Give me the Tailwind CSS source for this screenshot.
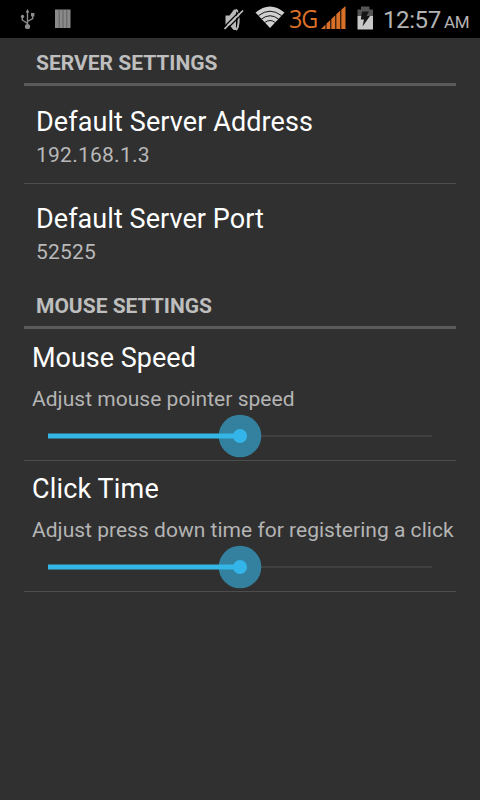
<!DOCTYPE html>
<html lang="en">
<head>
<meta charset="utf-8">
<title>Settings</title>
<script src="https://cdn.jsdelivr.net/npm/@tailwindcss/browser@4"></script>
</head>
<body class="h-[800px] w-[480px] overflow-hidden bg-[#303030] font-['Roboto',sans-serif] text-white">
<header class="flex h-[38px] items-start bg-black">
  <svg class="ml-[20px] mt-[8px] shrink-0" width="16" height="22" viewBox="0 0 16 22" fill="none" stroke="#8c8c8c" stroke-width="1.4">
    <path d="M7.500 18V3M7.500 15.500L2.300 12V9M7.500 13.500L12.700 10.500V7"/>
    <path d="M5.500 4.500L7.500 1L9.500 4.500Z" fill="#8c8c8c" stroke="none"/>
    <circle cx="7.500" cy="18.500" r="2.600" fill="#8c8c8c" stroke="none"/>
    <circle cx="2.500" cy="8.500" r="1.700" fill="#8c8c8c" stroke="none"/>
    <path d="M11 5h3.400v3.400H11z" fill="#8c8c8c" stroke="none"/>
  </svg>
  <svg class="ml-[19px] mt-[9px] shrink-0" width="16" height="20" viewBox="0 0 16 20">
    <path d="M0 .5h15.500v18.500H0z" fill="#8a8a8a"/>
    <path d="M4.200 .5v18.500M8 .5v18.500M11.800 .5v18.500" stroke="#555" stroke-width=".8"/>
  </svg>
  <svg class="ml-[152px] mt-[8px] shrink-0" width="22" height="24" viewBox="0 0 22 24">
    <path d="M2.500 7.500H6.500L11 1.500H13V22L10.500 22L6.500 17H2.500Z" fill="#b8b8b8"/>
    <path d="M13 1.500C16.500 4 16.500 19 13 22" stroke="#b8b8b8" stroke-width="2" fill="none"/>
    <path d="M.5 19.500L19 1" stroke="#000" stroke-width="1.300"/>
    <path d="M2.500 22.500L21 4" stroke="#000" stroke-width="1.300"/>
    <path d="M1.500 21L20 2.500" stroke="#c4c4c4" stroke-width="1.700"/>
  </svg>
  <svg class="ml-[10px] mt-[6px] shrink-0" width="30" height="23" viewBox="0 0 30 23">
    <path d="M15 22L.5 6.500Q15-5.500 29.500 6.500Z" fill="#d0d0d0"/>
    <path d="M3.500 9.600Q15 .8 26.500 9.600M6.500 13Q15 6.500 23.500 13M9.700 16.500Q15 12.500 20.300 16.500" fill="none" stroke="#000" stroke-width=".9"/>
  </svg>
  <span class="ml-[4px] w-[32px] shrink-0 whitespace-nowrap font-['Open_Sans',sans-serif] text-[26px] leading-[37px] tracking-[-1.200px] text-[#d8702a]"><span class="inline-block origin-left scale-x-[0.9]">3G</span></span>
  <svg class="mt-[6px] shrink-0" width="26" height="23" viewBox="0 0 26 23" fill="#d8702a">
    <path d="M0 23L4.500 18.500V23ZM5.500 23V17.500L9.300 14V23ZM10.300 23V13L14.300 9.300V23ZM15.300 23V8.300L19.300 4.500V23ZM20.300 23V3.700L24.500 0V23Z"/>
  </svg>
  <svg class="ml-[10px] mt-[6px] shrink-0" width="18" height="24" viewBox="0 0 18 24">
    <path d="M.5 3.500H4V.5H12.500V3.500H16V10H.5Z" fill="#555"/>
    <path d="M.5 10H16V23.500H.5Z" fill="#c8c8c8"/>
    <path d="M5 5.500H12L9.500 10H13L5.500 20.500L7 13.500H3.800Z" fill="#151515"/>
  </svg>
  <div class="ml-[8px] mt-[4px] flex items-baseline whitespace-nowrap text-[#b4b4b4]">
    <span class="w-[61px] text-[24px] leading-[33px] tracking-[-0.400px]">12:57</span>
    <span class="text-[17px] tracking-[-0.400px]">AM</span>
  </div>
</header>
<main class="px-6">
  <h2 class="h-12 border-b-[3px] border-[#5a5a5a] pl-3 text-[21px] font-bold leading-[51px] text-[#bebebe]"><span>SERVER SETTINGS</span></h2>
  <section class="h-[98px] border-b border-[#4d4d4d] pl-3 pt-[18px]">
    <h3 class="text-[27px] leading-9 tracking-[0.090px]">Default Server Address</h3>
    <p class="text-[21px] leading-[30px] tracking-[0.250px] text-[#b8b8b8]">192.168.1.3</p>
  </section>
  <section class="h-[97px] pl-3 pt-[17px]">
    <h3 class="text-[27px] leading-9 tracking-[0.060px]">Default Server Port</h3>
    <p class="text-[21px] leading-[30px] tracking-[0.200px] text-[#b8b8b8]">52525</p>
  </section>
  <h2 class="h-12 border-b-[3px] border-[#5a5a5a] pl-3 text-[21px] font-bold leading-[51px] text-[#bebebe]"><span>MOUSE SETTINGS</span></h2>
  <section class="h-[132px] border-b border-[#4d4d4d] pl-2 pt-[11px]">
    <h3 class="text-[27px] leading-9">Mouse Speed</h3>
    <p class="mt-[8px] whitespace-nowrap text-[21px] leading-[30px] tracking-[0.030px] text-[#b4b4b4]">Adjust mouse pointer speed</p>
    <svg class="ml-4 -mt-px block overflow-visible" width="384" height="46" viewBox="0 0 384 46">
      <path d="M192 23H384" stroke="#404040" stroke-width="2"/>
      <circle cx="192" cy="23" r="21.300" fill="#33819f"/>
      <path d="M0 23H192" stroke="#33b5e5" stroke-width="5"/>
      <circle cx="192" cy="23" r="7" fill="#33b5e9"/>
    </svg>
  </section>
  <section class="h-[131px] border-b border-[#4d4d4d] pl-2 pt-[10px]">
    <h3 class="text-[27px] leading-9 tracking-[0.150px]">Click Time</h3>
    <p class="mt-[8px] whitespace-nowrap text-[21px] leading-[30px] tracking-[0.020px] text-[#b4b4b4]">Adjust press down time for registering a click</p>
    <svg class="ml-4 -mt-px block overflow-visible" width="384" height="46" viewBox="0 0 384 46">
      <path d="M192 23H384" stroke="#404040" stroke-width="2"/>
      <circle cx="192" cy="23" r="21.300" fill="#33819f"/>
      <path d="M0 23H192" stroke="#33b5e5" stroke-width="5"/>
      <circle cx="192" cy="23" r="7" fill="#33b5e9"/>
    </svg>
  </section>
</main>
</body>
</html>
